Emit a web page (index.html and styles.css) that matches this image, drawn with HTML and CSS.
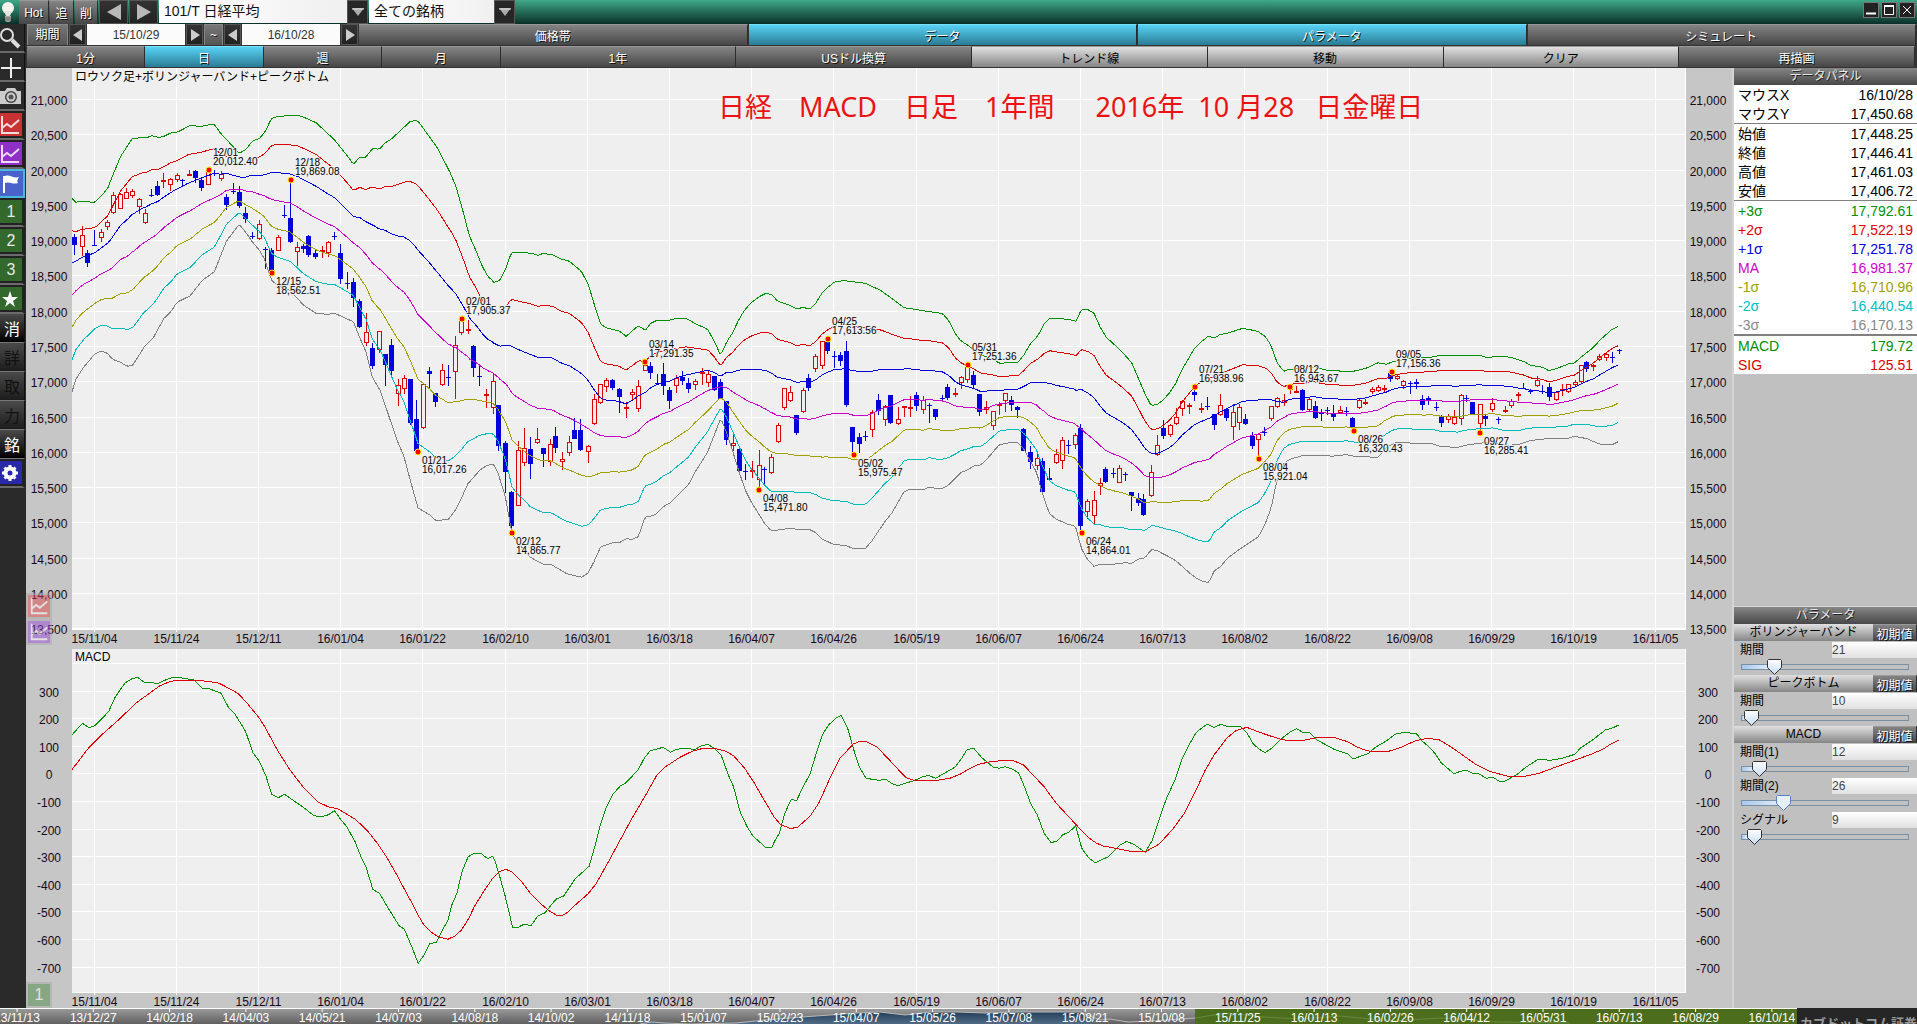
FILE: index.html
```html
<!DOCTYPE html>
<html lang="ja">
<head>
  <meta charset="UTF-8" />
  <meta name="viewport" content="width=device-width, initial-scale=1.0"/>
  <title>101/T 日経平均</title>
  <link rel="stylesheet" href="styles.css">
</head>
<body>
  <header class="titlebar">
    <span class="bulb">
      <svg width="18" height="24" viewBox="0 0 18 24"><circle cx="8" cy="8" r="6" fill="#f4f4ee"/><path d="M4 11h8l-2 5H6z" fill="#e4e4dc"/><path d="M5 16h6v5l-2 1H7l-2-1z" fill="#aaa"/><path d="M5 18h6M5 20h6" stroke="#666"/></svg>
    </span>
    <button class="btn w-hot">Hot</button>
    <button class="btn w-add">追</button>
    <button class="btn w-del">削</button>
    <button class="btn dark w-nav" aria-label="前の銘柄"><svg width="16" height="16" viewBox="0 0 16 16"><path d="M15 0v16L1 8z" fill="#b8b8b8"/></svg></button>
    <button class="btn dark w-nav" aria-label="次の銘柄"><svg width="16" height="16" viewBox="0 0 16 16"><path d="M1 0v16l14-8z" fill="#b8b8b8"/></svg></button>
    <div class="combo combo-name">
      <select aria-label="銘柄"><option>101/T 日経平均</option></select>
      <span class="combo-arrow"><svg width="12" height="8" viewBox="0 0 12 8"><path d="M0 0h12L6 8z" fill="#aaa"/><path d="M0 1h12" stroke="#ddd"/></svg></span>
    </div>
    <div class="combo combo-group">
      <select aria-label="グループ"><option>全ての銘柄</option></select>
      <span class="combo-arrow"><svg width="12" height="8" viewBox="0 0 12 8"><path d="M0 0h12L6 8z" fill="#aaa"/><path d="M0 1h12" stroke="#ddd"/></svg></span>
    </div>
    <div class="window-btns">
      <button aria-label="最小化"><svg width="14" height="14" viewBox="0 0 14 14"><path d="M2 10.5h10" stroke="#fff" stroke-width="2"/></svg></button>
      <button aria-label="最大化"><svg width="14" height="14" viewBox="0 0 14 14"><path d="M2.5 3v8.500h9V3z" fill="none" stroke="#fff"/><path d="M2 3h10" stroke="#fff" stroke-width="2"/></svg></button>
      <button aria-label="閉じる"><svg width="14" height="14" viewBox="0 0 14 14"><path d="M3 3l8 8M11 3l-8 8" stroke="#fff"/></svg></button>
    </div>
  </header>

  <div class="middle">
    <nav class="tools">
      <button aria-label="検索"><svg viewBox="0 0 24 26"><circle cx="7" cy="10" r="6" fill="none" stroke="#ddd" stroke-width="2"/><path d="M12 15l7 7" stroke="#ddd" stroke-width="4"/></svg></button>
      <button aria-label="追加"><svg viewBox="0 0 24 26"><path d="M11 4v20M1 14h20" stroke="#eee" stroke-width="2"/></svg></button>
      <button aria-label="撮影"><svg viewBox="0 0 24 26"><path d="M0 8h5l2-3h8l2 3h4v13H0z" fill="#ccc"/><circle cx="11" cy="14" r="6" fill="#444"/><circle cx="11" cy="14" r="4.500" fill="#ccc"/><circle cx="11" cy="14" r="2.500" fill="#555"/></svg></button>
      <button class="red" aria-label="チャート1"><svg viewBox="0 0 24 26"><path d="M3 4v17h17" fill="none" stroke="#f0dede" stroke-width="2"/><path d="M3 16l5-4 4 3 8-7" fill="none" stroke="#f0dede" stroke-width="2"/></svg></button>
      <button class="purple" aria-label="チャート2"><svg viewBox="0 0 24 26"><path d="M3 4v17h17" fill="none" stroke="#eadcf4" stroke-width="2"/><path d="M3 16l5-4 4 3 8-7" fill="none" stroke="#eadcf4" stroke-width="2"/></svg></button>
      <button class="flag" aria-label="フラグ"><svg viewBox="0 0 24 26"><path d="M4 5v17" stroke="#fff" stroke-width="2"/><path d="M5 5c5-2 8 3 14 1-2 3-2 4-1 6-6 2-8-2-13 0z" fill="#fff"/></svg></button>
      <button class="green">1</button>
      <button class="green">2</button>
      <button class="green">3</button>
      <button class="green" aria-label="お気に入り"><svg viewBox="0 0 24 26"><path d="M11 5l2 6h6l-5 4 2 6-5-4-5 4 2-6-5-4h6z" fill="#fff"/></svg></button>
      <button class="kanji">消</button>
      <button class="kanji off">詳</button>
      <button class="kanji off">取</button>
      <button class="kanji off">力</button>
      <button class="kanji">銘</button>
      <button class="gear" aria-label="設定"><svg viewBox="0 0 24 26"><circle cx="11" cy="13" r="4.500" fill="none" stroke="#fff" stroke-width="4"/><path d="M11 5v3M11 18v3M3 13h3M16 13h3M5.500 7.500l2 2M14.500 16.500l2 2M16.500 7.500l-2 2M5.500 18.500l2-2" stroke="#fff" stroke-width="3"/></svg></button>
    </nav>

    <main class="content">
      <div class="bar">
        <label class="period-label" for="dateFrom">期間</label>
        <button class="btn dark step" aria-label="開始日を戻す"><svg width="10" height="12" viewBox="0 0 10 12"><path d="M9 0v12L0 6z" fill="#ccc"/></svg></button>
        <input class="date" id="dateFrom" value="15/10/29">
        <button class="btn dark step" aria-label="開始日を進める"><svg width="10" height="12" viewBox="0 0 10 12"><path d="M1 0v12l9-6z" fill="#ccc"/></svg></button>
        <label class="tilde" for="dateTo">~</label>
        <button class="btn dark step" aria-label="終了日を戻す"><svg width="10" height="12" viewBox="0 0 10 12"><path d="M9 0v12L0 6z" fill="#ccc"/></svg></button>
        <input class="date" id="dateTo" value="16/10/28">
        <button class="btn dark step" aria-label="終了日を進める"><svg width="10" height="12" viewBox="0 0 10 12"><path d="M1 0v12l9-6z" fill="#ccc"/></svg></button>
        <button class="btn tab">価格帯</button>
        <button class="btn tab on">データ</button>
        <button class="btn tab on">パラメータ</button>
        <button class="btn tab">シミュレート</button>
      </div>
      <div class="bar tabs">
        <button class="btn tab">1分</button>
        <button class="btn tab on">日</button>
        <button class="btn tab">週</button>
        <button class="btn tab">月</button>
        <button class="btn tab wide">1年</button>
        <button class="btn tab wide">USドル換算</button>
        <button class="btn tab wide light">トレンド線</button>
        <button class="btn tab wide light">移動</button>
        <button class="btn tab wide light">クリア</button>
        <button class="btn tab wide">再描画</button>
      </div>

      <div class="work">
        <div class="charts">
          <section class="chart price-chart">
            <svg id="priceChart"></svg>
            <p class="chart-title">ロウソク足+ボリンジャーバンド+ピークボトム</p>
            <h1 class="caption">日経　MACD　日足　1年間　  2016年  10 月28   日金曜日</h1>
            <div class="ghosts">
              <span class="ghost red"><svg viewBox="0 0 24 26"><path d="M4 4v17h17M4 16l5-4 4 3 8-7" fill="none" stroke="#fff" stroke-width="2"/></svg></span>
              <span class="ghost purple"><svg viewBox="0 0 24 26"><path d="M4 4v17h17M4 16l5-4 4 3 8-7" fill="none" stroke="#fff" stroke-width="2"/></svg></span>
            </div>
          </section>
          <section class="chart macd-chart">
            <svg id="macdChart"></svg>
            <p class="chart-title">MACD</p>
            <div class="ghosts">
              <span class="ghost green">1</span>
            </div>
          </section>
        </div>

        <aside class="side">
          <h2 class="side-head">データパネル</h2>
          <table class="data">
            <tbody>
              <tr><th>マウスX</th><td>16/10/28</td></tr>
              <tr><th>マウスY</th><td>17,450.68</td></tr>
            </tbody>
            <tbody>
              <tr><th>始値</th><td>17,448.25</td></tr>
              <tr><th>終値</th><td>17,446.41</td></tr>
              <tr><th>高値</th><td>17,461.03</td></tr>
              <tr><th>安値</th><td>17,406.72</td></tr>
            </tbody>
            <tbody>
              <tr class="c-green"><th>+3σ</th><td>17,792.61</td></tr>
              <tr class="c-red"><th>+2σ</th><td>17,522.19</td></tr>
              <tr class="c-blue"><th>+1σ</th><td>17,251.78</td></tr>
              <tr class="c-magenta"><th>MA</th><td>16,981.37</td></tr>
              <tr class="c-olive"><th>-1σ</th><td>16,710.96</td></tr>
              <tr class="c-cyan"><th>-2σ</th><td>16,440.54</td></tr>
              <tr class="c-gray"><th>-3σ</th><td>16,170.13</td></tr>
            </tbody>
            <tbody>
              <tr class="c-green"><th>MACD</th><td>179.72</td></tr>
              <tr class="c-red"><th>SIG</th><td>125.51</td></tr>
            </tbody>
          </table>

          <div class="params">
            <h2 class="side-head">パラメータ</h2>
            <div class="group-head"><h3>ボリンジャーバンド</h3><button class="btn">初期値</button></div>
            <div class="param">
              <label for="bbVal">期間</label><input id="bbVal" value="21">
              <input type="range" aria-label="ボリンジャーバンド 期間" min="8" max="85" value="21">
            </div>
            <div class="group-head"><h3>ピークボトム</h3><button class="btn">初期値</button></div>
            <div class="param">
              <label for="pbVal">期間</label><input id="pbVal" value="10">
              <input type="range" aria-label="ピークボトム 期間" min="9" max="92" value="10">
            </div>
            <div class="group-head"><h3>MACD</h3><button class="btn">初期値</button></div>
            <div class="param">
              <label for="m1Val">期間(1)</label><input id="m1Val" value="12">
              <input type="range" aria-label="MACD 期間(1)" min="6" max="100" value="12">
            </div>
            <div class="param">
              <label for="m2Val">期間(2)</label><input id="m2Val" value="26">
              <input type="range" class="active" aria-label="MACD 期間(2)" min="6" max="94" value="26">
            </div>
            <div class="param">
              <label for="sgVal">シグナル</label><input id="sgVal" value="9">
              <input type="range" aria-label="シグナル" min="6" max="103" value="9">
            </div>
          </div>
        </aside>
      </div>
    </main>
  </div>

  <footer class="timeline">
    <svg id="timeline"></svg>
    <div class="brand">カブドットコム証券</div>
  </footer>

  <script src="script.js"></script>
</body>
</html>
```

FILE: styles.css
```css
* {
  box-sizing: border-box;
}

body {
  margin: 0;
  height: 100vh;
  display: flex;
  flex-direction: column;
  overflow: hidden;
  background: #2a2a2a;
  font-family: "Liberation Sans", "Noto Sans CJK JP", sans-serif;
  font-size: 12px;
  color: #000;
}

button, input, select {
  font-family: inherit;
  font-size: 12px;
  margin: 0;
  padding: 0;
  border: none;
  border-radius: 0;
}

h1, h2, h3, p {
  margin: 0;
  font-weight: normal;
}

/* title bar */
.titlebar {
  height: 24px;
  flex: none;
  display: flex;
  gap: 1px;
  background: linear-gradient(#3fa888, #0a2f28);
}

.bulb {
  width: 18px;
}

.btn {
  display: flex;
  align-items: center;
  justify-content: center;
  background: linear-gradient(#848484, #464646);
  border-top: 1px solid #999;
  border-right: 1px solid #2c2c2c;
  color: #fff;
  text-shadow: 1px 1px 0 #111;
  white-space: nowrap;
}

.btn.dark {
  background: linear-gradient(#333, #222);
  border: 1px solid #555;
}

.w-hot { width: 30px; }
.w-add { width: 24px; }
.w-del { width: 23px; }
.w-nav { width: 29px; }
.combo-name { width: 209px; }
.combo-group { width: 146px; }

.combo {
  position: relative;
  display: flex;
}

.combo select {
  appearance: none;
  width: 100%;
  height: 23px;
  padding: 0 24px 2px 5px;
  font-size: 14px;
  background: linear-gradient(90deg, #fff, #eee);
  color: #111;
}

.combo-arrow {
  position: absolute;
  right: 0;
  top: 0;
  width: 21px;
  height: 24px;
  display: flex;
  align-items: center;
  justify-content: center;
  background: #262626;
  border: 1px solid #555;
  pointer-events: none;
}

.window-btns {
  margin: 2px 2px 0 auto;
  display: flex;
  gap: 2px;
}

.window-btns button {
  width: 16px;
  height: 16px;
  background: #222;
  border: 1px solid #777;
  display: flex;
}

.middle {
  flex: 1;
  min-height: 0;
  display: flex;
}

/* left tools */
.tools {
  width: 26px;
  flex: none;
  background: #2a2a2a;
}

.tools button {
  display: flex;
  align-items: center;
  justify-content: center;
  width: 25px;
  height: 29px;
  background: #2a2a2a;
  border-bottom: 2px solid #6a6a6a;
  border-right: 1px solid #111;
  color: #fff;
  overflow: hidden;
}

.tools button svg {
  width: 24px;
  height: 26px;
  flex: none;
}

.tools button.red,
.tools button.purple,
.tools button.green,
.tools button.gear {
  border-right: 3px solid #222;
  box-shadow: inset 0 2px 0 #222, inset 0 -2px 0 #222;
}

.tools .red { background: #c83232; }
.tools .purple { background: #9030c8; }
.tools .green { background: #33692c; font-size: 16px; color: #e8e8e8; }
.tools .gear { background: #2828a8; }

.tools .flag {
  background: #4a62cc;
  border: 2px solid #48b8dc;
  border-left: none;
}

.tools .kanji {
  background: linear-gradient(#4a4a4a, #000);
  font-size: 16px;
  border-bottom: 1px solid #777;
}

.tools .kanji.off {
  background: linear-gradient(#4a4a4a, #1c1c1c);
  color: #111;
}

.content {
  flex: 1;
  min-width: 0;
  display: flex;
  flex-direction: column;
}

/* period and tab rows */
.bar {
  height: 22px;
  flex: none;
  display: flex;
  gap: 1px;
  padding: 0 1px 1px 1px;
  background: #333;
}

.bar.tabs {
  gap: 0;
  padding-right: 2px;
}

.period-label,
.tilde {
  width: 41px;
  flex: none;
  line-height: 20px;
  text-align: center;
  color: #fff;
  background: linear-gradient(#777, #555);
  border: 1px solid #888;
  border-bottom: none;
  text-shadow: 1px 1px 0 #111;
}

.tilde {
  width: 19px;
}

.step {
  width: 17px;
  flex: none;
}

.date {
  width: 98px;
  flex: none;
  text-align: center;
  background: #fbfbfb;
  color: #333;
}

.tab {
  flex: 1;
  min-width: 0;
}

.tab.wide {
  flex: 2;
}

.tab.on {
  background: linear-gradient(#58d2f6, #2a7c94);
  border-top-color: #7ae0fa;
}

.tab.light {
  background: linear-gradient(#e0e0e0, #858585);
  color: #000;
  text-shadow: none;
}

.work {
  flex: 1;
  min-height: 0;
  display: flex;
}

/* charts */
.charts {
  flex: 1;
  min-width: 0;
  display: flex;
  flex-direction: column;
  background: #c6c6c6;
  border-right: 2px solid #d4d4d4;
}

.chart {
  position: relative;
  min-height: 0;
}

.price-chart {
  flex: 580;
}

.macd-chart {
  flex: 360;
}

.chart > svg {
  display: block;
  position: absolute;
  width: 100%;
  height: 100%;
  overflow: visible;
}

.chart-title {
  position: absolute;
  top: 0;
  left: 49px;
  line-height: 18px;
  white-space: nowrap;
}

.caption {
  position: absolute;
  top: 19px;
  left: 0;
  width: 100%;
  padding-left: 692px;
  font-family: "Noto Sans", "Noto Sans CJK JP", sans-serif;
  font-size: 27px;
  line-height: 40px;
  white-space: pre;
  color: #ea1212;
}

.ghosts {
  position: absolute;
  left: 0;
  bottom: 0;
  display: flex;
  flex-direction: column;
  opacity: 0.5;
}

.ghost {
  width: 26px;
  height: 26px;
  border: 2px solid #aaa;
  display: flex;
  align-items: center;
  justify-content: center;
  font-size: 16px;
  color: #fff;
}

.ghost.red { background: #e04848; }
.ghost.purple { background: #9a4ad8; }
.ghost.green { background: #4a8a44; }

.price-chart .ghosts {
  bottom: 3px;
}

.grid { stroke: #fff; }
.plot { fill: #efefef; }
.axis { font-size: 12px; text-anchor: middle; fill: #180818; }
.line { fill: none; stroke-width: 1; }
.up { fill: #efefef; stroke: #dd0000; }
.up-wick { stroke: #dd0000; }
.down { fill: #0000dd; }
.down-wick { stroke: #0000dd; }
.peak { fill: #ff0000; stroke: #ffee00; stroke-width: 1; }

.peak-text {
  font-size: 10px;
  fill: #000;
  stroke: #efefef;
  stroke-width: 2;
  paint-order: stroke;
}

/* right panel */
.side {
  width: 183px;
  flex: none;
  background: #c0c0c0;
  overflow: hidden;
}

.side-head {
  height: 17px;
  line-height: 16px;
  font-size: 12px;
  text-align: center;
  color: #e8e8e8;
  background: linear-gradient(#868686, #484848);
  text-shadow: 1px 1px 0 #222;
}

.data {
  width: 100%;
  border-collapse: separate;
  border-spacing: 0;
  background: #fff;
  font-size: 14px;
}

.data th,
.data td {
  height: 19px;
  line-height: 18px;
  padding: 1px 4px 0;
  font-weight: normal;
  text-align: left;
}

.data td {
  text-align: right;
}

.data tbody + tbody tr:first-child > * {
  height: 20px;
  border-top: 1px solid #808080;
}

.data tbody:last-child tr:first-child > * {
  height: 21px;
  border-top-width: 2px;
}

.c-green { color: #009000; }
.c-red { color: #e00000; }
.c-blue { color: #0000e0; }
.c-magenta { color: #d000d0; }
.c-olive { color: #a0a000; }
.c-cyan { color: #00c0c0; }
.c-gray { color: #888; }

.params {
  margin-top: 232px;
  border-top: 1px solid #d8d8d8;
}

.group-head {
  height: 17px;
  display: flex;
  background: linear-gradient(#e0e0e0, #868686);
}

.group-head h3 {
  flex: 1;
  font-size: 12px;
  line-height: 17px;
  text-align: center;
}

.group-head .btn {
  width: 44px;
}

.param {
  display: grid;
  grid-template-columns: 98px 1fr;
  grid-template-rows: 17px 17px;
}

.param label {
  padding-left: 6px;
  line-height: 18px;
}

.param input:not([type=range]) {
  min-width: 0;
  height: 16px;
  margin-top: 1px;
  background: linear-gradient(#fff, #e0e0e0);
  color: #444;
}

.param input[type=range] {
  grid-column: 1 / 3;
  appearance: none;
  margin: 0 8px 0 7px;
  height: 17px;
  background: none;
}

.param input[type=range]::-webkit-slider-runnable-track {
  height: 6px;
  border: 1px solid #7890a4;
  background: linear-gradient(90deg, #a8c8ee, #e0ecf8) 0 0 / var(--fill) 100% no-repeat;
}

.param input[type=range]::-webkit-slider-thumb {
  appearance: none;
  width: 15px;
  height: 16px;
  margin-top: -6px;
  background: url("data:image/svg+xml,%3Csvg xmlns='http://www.w3.org/2000/svg' width='15' height='16'%3E%3ClinearGradient id='g' x2='0' y2='1'%3E%3Cstop stop-color='%23fff'/%3E%3Cstop offset='1' stop-color='%23c4dcf0'/%3E%3C/linearGradient%3E%3Cpath d='M1.500 .5h12l1 1v7l-7 7-7-7v-7z' fill='url(%23g)' stroke='%23333'/%3E%3C/svg%3E");
}

.param input.active::-webkit-slider-thumb {
  background: url("data:image/svg+xml,%3Csvg xmlns='http://www.w3.org/2000/svg' width='15' height='16'%3E%3Cpath d='M1.500 .5h12l1 1v7l-7 7-7-7v-7z' fill='%23e4effa' stroke='%235a80c8'/%3E%3C/svg%3E");
}

/* bottom timeline */
.timeline {
  height: 16px;
  flex: none;
  display: flex;
  overflow: hidden;
}

.timeline svg {
  flex: 1;
  min-width: 0;
  height: 16px;
  border-top: 1px solid #fff;
}

.tl-text {
  font-size: 12px;
  text-anchor: middle;
  fill: #fff;
}

.brand {
  width: 120px;
  flex: none;
  height: 16px;
  padding: 7px 0 0 3px;
  font-size: 13px;
  font-weight: bold;
  line-height: 18px;
  color: #999;
  background: #262626;
  white-space: nowrap;
}
```

FILE: script.js
```js
// Each block holds an origin, the units per pixel (x, y) and its rows
const candles = [
  { x: 70, y: 90, kx: 3, ky: 3, rows: `
b 13 433 441 464 494|r 36 408 436 470 498|b 52 479 489 518 530|b 72 420 465 467 467|r 92 417 427 445 456
r 110 389 397 412 419|r 129 307 316 368 372|r 149 308 311 356 356|r 167 295 307 326 326|r 186 297 304 318 324
r 206 323 328 350 372|r 225 358 370 399 402|b 243 297 315 317 321|b 262 273 288 314 318|r 280 248 270 273 293
r 300 264 268 284 303|r 320 248 256 270 276|b 337 267 270 273 290|r 358 240 252 255 258|b 376 239 243 264 278
b 394 263 270 294 303|r 414 240 240 284 286|b 433 239 248 250 258|r 452 244 251 266 272|b 469 312 321 345 359
b 490 279 303 305 313|b 508 287 306 348 354|b 526 350 369 387 399|b 546 427 438 440 448|r 567 390 403 448 450
b 584 472 478 480 538|b 603 475 480 543 548|r 624 436 442 482 482|b 641 345 376 378 384|b 660 270 384 456 460
r 680 457 470 486 528|b 698 462 468 476 490|b 715 434 438 494 501|b 736 479 489 501 508|r 755 468 479 487 503
r 774 452 457 488 500|b 793 427 438 441 449|b 811 461 489 567 583|b 831 545 580 582 597|b 850 564 576 624 652
b 868 628 633 711 714|r 888 669 727 758 768` },
  { x: 340, y: 250, kx: 3, ky: 3, rows: `
b 97 279 294 347 357|r 117 244 244 301 309|b 134 312 312 345 408|b 154 266 285 362 385|r 173 387 406 433 467
r 192 376 385 416 433|b 211 387 387 518 524|b 229 450 507 602 606|r 249 402 403 535 537|b 268 350 363 371 413
b 286 428 429 456 471|r 306 343 361 406 408|b 325 345 382 385 408|r 345 258 286 365 447|r 363 210 213 248 255
r 383 210 238 244 252|b 400 284 288 353 381|b 418 347 379 382 408|r 438 417 433 439 474|r 458 371 394 475 492
b 475 465 465 587 602|b 496 572 579 665 728|b 514 722 726 827 840|r 534 572 601 767 768|r 553 535 595 640 647
b 571 561 598 641 687|r 590 534 566 578 582|b 609 594 594 611 651|r 629 567 583 637 647|b 646 531 559 594 608
r 667 607 626 637 659|r 686 558 577 610 617|b 703 504 540 566 566|b 721 507 540 599 602|r 743 585 589 605 638
r 762 433 448 523 524|r 780 403 403 460 461|r 799 385 391 412 426|b 817 387 391 413 420|b 838 414 417 440 489
r 857 455 472 475 504|r 876 417 427 436 454|r 894 390 409 478 487|r 915 342 345 364 364|b 931 336 348 369 387
b 952 373 400 402 405|b 970 339 372 408 435|b 988 411 420 453 476|r 1008 376 384 409 429|b 1027 362 381 392 405
b 1045 384 399 416 429|r 1066 387 394 406 419|r 1085 355 366 369 404|r 1104 364 373 400 412|b 1121 377 379 419 422
b 1141 388 396 446 447|b 1159 453 454 569 585|r 1179 555 580 588 602` },
  { x: 720, y: 290, kx: 3, ky: 3, rows: `
b 58 471 478 542 552|b 76 521 543 546 570|r 95 513 541 544 564|r 117 480 525 571 598|b 133 530 537 539 588
r 152 491 502 548 552|r 173 400 406 457 458|r 191 294 295 355 360|r 210 288 307 334 336|b 228 375 376 429 434
r 248 294 301 365 369|b 265 252 264 294 303|r 286 192 199 236 245|r 306 153 154 229 237|b 322 150 157 183 192
b 343 183 198 201 234|b 361 185 195 213 228|b 379 153 183 345 351|b 397 411 412 456 492|b 418 430 442 462 489
b 436 422 437 440 453|r 456 361 367 421 441|b 475 312 330 362 375|r 494 345 349 391 408|b 511 315 315 398 402
r 534 352 388 403 404|r 552 348 349 355 381|r 571 318 352 358 381|b 589 306 315 348 362|r 609 319 331 361 372
b 627 339 345 347 399|b 646 357 358 381 390|b 665 315 324 326 333|b 682 282 291 324 330|r 705 294 309 314 321
r 722 258 262 280 297|r 741 223 228 269 279|b 760 243 255 285 297|b 778 312 313 366 378|r 799 334 352 361 372
r 819 363 364 409 420|r 836 336 342 348 375|r 856 309 310 334 367|b 874 318 330 345 363|b 892 348 351 359 384
b 910 414 417 482 483|b 931 468 486 516 537|r 950 486 505 529 540|b 967 504 513 606 616|b 988 534 565 570 573
r 1008 477 493 520 521|r 1026 442 451 514 537|b 1045 451 466 469 491|r 1065 429 436 466 477|b 1081 402 415 708 720
r 1102 627 634 667 687|r 1122 603 631 679 702|r 1140 564 580 589 615|b 1156 531 537 575 580|b 1178 534 549 551 564
r 1197 525 535 580 580|b 1216 547 553 555 573|b 1234 606 606 618 663` },
  { x: 1100, y: 320, kx: 2.904, ky: 3, rows: `
b 109 518 534 549 558|b 126 522 537 585 588|r 148 434 457 529 530|r 165 345 376 406 408|b 182 300 324 348 356
r 203 312 316 346 350|r 220 264 292 313 315|r 239 240 244 268 288|r 258 250 254 260 282|b 274 210 216 224 243
r 294 249 265 268 279|b 312 230 258 262 270|b 330 282 282 315 330|r 348 222 256 286 287|b 367 265 267 294 303
r 386 252 277 321 360|r 404 252 261 310 330|b 422 282 297 312 315|b 440 336 348 378 387|r 459 342 343 361 407
b 477 321 336 339 348|r 496 258 259 298 302|r 514 231 235 262 263|r 533 223 240 249 258|r 551 204 205 211 223
r 569 198 213 216 218|b 588 207 210 270 273|r 607 232 238 271 273|b 623 243 258 294 297|b 642 267 279 281 303
b 660 262 270 272 284|b 678 255 279 291 303|r 698 257 271 280 281|b 715 262 273 276 288|b 733 291 294 321 327
r 753 234 241 264 266|r 771 237 245 250 256|r 789 202 208 217 222|r 808 194 202 212 217|r 826 195 203 206 216
b 843 150 160 177 186|r 862 162 169 178 180|r 881 180 184 199 206|b 899 183 189 192 222|b 918 178 187 193 207
b 936 226 237 255 270|b 953 228 235 241 256|b 975 247 261 265 272|b 991 285 288 309 321|r 1010 282 287 301 308
r 1028 270 291 313 314|r 1047 222 226 298 315|b 1064 226 234 237 246|b 1081 246 246 282 286|r 1103 253 253 313 345
b 1119 286 289 297 318|r 1138 234 250 269 275|b 1157 290 297 299 312|r 1175 258 271 277 280|r 1194 238 242 258 263
r 1213 216 223 229 243|b 1229 189 205 208 208|b 1250 207 213 215 222|r 1269 168 181 199 200|b 1284 195 213 216 222
b 1303 189 201 231 243|r 1324 213 217 239 243|r 1341 192 207 211 228|r 1358 192 193 215 219|r 1379 180 187 196 201
r 1397 135 136 187 188|b 1412 123 126 146 156|r 1433 131 136 139 153|r 1450 102 109 121 123|r 1469 99 103 115 122
b 1487 96 112 114 128|b 1506 87 91 93 102` }
];

// +3σ
const upper = [
  { x: 70, y: 90, kx: 3, ky: 3, pts: '8 328 18 337 30 334 75 337 92 320 113 295 132 247 152 199 186 147 209 143 230 143 246 137 263 142 280 140 303 128 320 127 337 119 358 107 394 109 432 102 452 130 508 190 528 178 548 153 568 146 586 124 604 86 622 79 684 76 700 81 738 98 794 150 834 200 850 223 869 202 887 202 908 175 928 178 946 158 964 147 1020 95 1042 91 1062 118 1101 172 1140 247 1158 290 1178 360 1198 437' },
  { x: 340, y: 250, kx: 3, ky: 3, pts: '408 2 425 45 442 77 462 97 478 92 496 60 514 8 571 9 594 16 610 10 641 15 661 27 687 33 724 64 745 104 764 167 782 223 800 234 838 243 858 259 895 227 916 241 932 220 950 211 990 210 1008 206 1040 206 1070 223 1102 237 1121 270 1142 316' },
  { x: 720, y: 290, kx: 3, ky: 3, pts: '20 156 38 128 56 90 74 60 93 39 118 20 138 10 156 14 172 33 212 47 232 58 248 51 268 58 286 42 304 12 320 -5 343 -24 372 -28 436 -20 480 0 515 25 552 53 572 56 668 71 687 93 705 130 722 152 744 166 780 193 818 208 840 220 895 216 912 194 932 160 952 140 972 103 990 84 1044 88 1068 94 1084 59 1104 59 1122 70' },
  { x: 1100, y: 320, kx: 2.904, ky: 3, pts: '0 20 18 52 55 86 92 128 130 220 148 256 166 254 183 240 201 220 220 190 240 145 257 116 275 84 298 62 314 49 332 54 350 43 370 40 414 25 440 30 460 35 480 50 496 75 514 127 533 154 550 148 590 146 620 141 660 151 680 150 700 154 735 154 772 145 808 128 830 133 848 126 900 115 960 112 990 106 1108 107 1120 112 1175 109 1200 114 1232 125 1250 136 1285 142 1303 152 1325 146 1360 132 1378 129 1396 112 1432 83 1452 60 1488 27 1506 19' }
];

// -3σ
const lower = [
  { x: 0, y: 240, kx: 3, ky: 3, pts: '217 452 228 417 250 383 285 341 302 334 320 338 338 358 360 366 382 379 398 376 432 322 460 293 492 235 513 215 530 188 548 178 570 168 606 122 643 95' },
  { x: 70, y: 90, kx: 3, ky: 3, pts: '470 452 508 403 528 428 548 457 568 480 584 508 604 570 622 586 660 601 700 645 738 670 772 673 794 670 850 695' },
  { x: 340, y: 250, kx: 3, ky: 3, pts: '60 265 78 305 97 382 120 420 154 520 173 575 192 620 212 695 234 774 270 795 286 811 324 809 345 782 363 748 383 702 420 660 440 647 460 642 475 672 496 740 516 852 534 878 571 922 610 943 631 942 680 971 725 982 745 968 762 935 782 890 818 878 838 878 860 866 876 868 895 860 915 801 932 799 950 791 970 770 990 759 1045 705 1066 665 1102 608 1121 560 1142 505' },
  { x: 720, y: 290, kx: 3, ky: 3, pts: '20 428 40 490 58 548 76 600 93 635 112 665 135 702 154 723 210 715 230 718 268 718 286 727 306 747 340 763 380 767 400 776 436 776 456 752 494 696 516 668 552 605 570 598 610 600 628 590 644 595 668 595 687 584 722 548 740 541 764 526 782 525 800 508 838 464 870 458 894 459 912 478 932 515 950 548 967 610 988 670 1008 687 1044 703 1066 708 1084 775 1102 808 1122 829' },
  { x: 1100, y: 320, kx: 2.904, ky: 3, pts: '0 733 37 733 72 728 92 730 110 718 130 714 150 688 166 692 203 712 220 722 258 757 276 772 298 784 316 788 332 752 350 740 370 715 405 688 440 664 460 650 478 615 496 568 514 480 533 432 550 418 588 407 680 408 716 404 740 409 808 412 826 388 845 374 862 367 900 369 940 371 965 371 990 380 1040 382 1064 375 1100 370 1140 366 1175 376 1215 374 1250 362 1285 357 1360 355 1378 349 1414 356 1450 372 1488 374 1506 364' }
];

const macd = [
  { x: 60, y: 650, kx: 1.96, ky: 3, pts: '24 254 44 220 57 233 68 227 86 200 96 182 108 142 120 115 128 98 140 87 152 82 165 97 192 100 205 91 218 84 230 82 262 90 279 115 292 116 316 130 330 172 342 190 364 245 378 308 390 333 403 375 415 433 428 443 440 433 478 473 495 494 503 499 516 499 526 494 538 482 550 508 562 530 578 574 590 620 600 652 613 718 627 731 638 761 665 828 675 838 690 892 702 940 712 918 725 881 738 877 750 838 760 812 768 765 778 730 788 665 800 620 812 610 825 610 838 626 848 618 853 635 862 680 872 735 887 832 898 832 910 822 923 827 937 797 950 789 972 748 987 738 1010 686 1037 649 1050 580 1060 520 1070 475 1084 432 1098 408 1108 400 1133 360 1145 325 1157 302 1182 292 1197 307 1207 299 1220 295 1245 298 1258 287 1269 283 1282 294 1296 316 1310 375 1320 410 1333 485 1346 528 1358 558 1383 592 1395 592 1402 570 1410 550 1420 492 1433 449 1444 451 1456 412 1470 372 1482 312 1494 255 1506 226 1520 205 1531 196' },
  { x: 840, y: 690, kx: 1.96, ky: 3, pts: '4 80 15 115 26 175 37 228 51 265 76 271 90 268 103 282 113 287 125 281 145 272 162 260 174 256 187 265 225 232 238 206 249 179 262 175 278 203 300 231 312 235 323 230 336 236 350 248 362 292 374 342 387 375 400 430 414 458 425 453 437 434 449 426 462 408 474 475 487 503 500 518 526 500 549 465 562 454 578 465 598 487 612 452 625 390 640 325 658 265 670 208 684 165 698 128 712 110 720 103 733 112 747 103 758 109 785 110 798 130 810 162 822 178 833 188 847 174 862 150 882 126 895 116 907 127 920 128 935 150 970 179 995 192 1006 207 1018 200 1035 191 1050 171 1070 154 1088 133 1105 127 1130 131 1142 155 1152 167 1166 190 1178 218 1204 252 1215 244 1228 241 1240 250 1252 251 1267 265 1280 262 1292 274 1303 274 1328 252 1343 233 1368 208 1392 211 1416 205 1440 193 1452 173 1475 150 1500 120 1514 114 1526 105' }
];

const signal = [
  { x: 60, y: 650, kx: 1.96, ky: 3, pts: '24 358 57 292 85 250 115 209 150 158 195 108 215 95 230 91 265 91 290 94 312 100 340 122 350 132 366 158 390 203 402 232 427 303 450 358 475 408 505 455 525 470 545 477 580 509 604 545 622 580 642 626 662 680 682 738 692 765 702 796 713 824 728 847 742 861 760 868 774 858 787 840 802 803 812 770 830 725 848 685 862 664 874 658 887 667 905 695 922 730 945 765 962 786 974 796 985 796 995 787 1010 765 1035 731 1050 703 1075 635 1098 570 1120 508 1150 430 1170 375 1187 350 1215 322 1240 303 1258 296 1282 295 1305 304 1320 317 1342 355 1362 402 1380 450 1400 502 1412 523 1432 536 1446 531 1470 499 1487 460 1510 382' },
  { x: 840, y: 690, kx: 1.96, ky: 3, pts: '0 205 12 185 26 162 37 155 50 154 72 170 92 202 115 240 130 263 148 273 190 271 215 265 235 253 252 238 272 223 298 214 338 211 360 225 374 248 400 290 424 340 462 403 485 440 502 459 516 468 540 475 570 484 600 484 625 463 652 418 675 370 698 300 715 243 733 195 758 145 775 123 797 112 830 131 860 146 880 152 908 151 935 143 968 142 995 155 1012 170 1030 181 1045 185 1075 184 1100 172 1128 152 1152 145 1175 150 1200 173 1245 222 1275 245 1310 259 1342 259 1370 250 1425 219 1470 194 1495 178 1510 163 1526 151' }
];

// x, y, date, price, 1 = peak / 0 = bottom
const peaks = [
  [209, 170, '12/01', '20,012.40', 1], [291, 180, '12/18', '19,869.08', 1],
  [272, 273, '12/15', '18,562.51', 0], [462, 319, '02/01', '17,905.37', 1],
  [418, 452, '01/21', '16,017.26', 0], [512, 533, '02/12', '14,865.77', 0],
  [645, 362, '03/14', '17,291.35', 1], [759, 490, '04/08', '15,471.80', 0],
  [828, 339, '04/25', '17,613.56', 1], [854, 455, '05/02', '15,975.47', 0],
  [968, 365, '05/31', '17,251.36', 1], [1082, 533, '06/24', '14,864.01', 0],
  [1195, 387, '07/21', '16,938.96', 1], [1259, 459, '08/04', '15,921.04', 0],
  [1290, 387, '08/12', '16,943.67', 1], [1354, 431, '08/26', '16,320.43', 0],
  [1392, 372, '09/05', '17,156.36', 1], [1480, 433, '09/27', '16,285.41', 0]
];

const dates = ['15/11/04', '15/11/24', '15/12/11', '16/01/04', '16/01/22', '16/02/10', '16/03/01', '16/03/18', '16/04/07', '16/04/26', '16/05/19', '16/06/07', '16/06/24', '16/07/13', '16/08/02', '16/08/22', '16/09/08', '16/09/29', '16/10/19', '16/11/05'];
const timelineDates = ['13/11/13', '13/12/27', '14/02/18', '14/04/03', '14/05/21', '14/07/03', '14/08/18', '14/10/02', '14/11/18', '15/01/07', '15/02/23', '15/04/07', '15/05/26', '15/07/08', '15/08/21', '15/10/08', '15/11/25', '16/01/13', '16/02/26', '16/04/12', '16/05/31', '16/07/13', '16/08/29', '16/10/14'];

const LEFT = 26, CHART_W = 1706;
const PLOT_L = 72, PLOT_R = 1685;

function trace(blocks) {
  const out = [];
  blocks.forEach(b => {
    const n = b.pts.split(' ').map(Number);
    for (let i = 0; i < n.length; i += 2) {
      out.push([b.x + n[i] / b.kx, b.y + n[i + 1] / b.ky]);
    }
  });
  return out;
}

function valueAt(points, x) {
  let i = 1;
  while (i < points.length - 1 && points[i][0] < x) i++;
  const [x0, y0] = points[i - 1];
  const [x1, y1] = points[i];
  return y0 + (y1 - y0) * (x - x0) / (x1 - x0);
}

function polyline(points, color, px, py) {
  const s = points.map(p => px(p[0]).toFixed(1) + ',' + py(p[1]).toFixed(1)).join(' ');
  return `<polyline class="line" stroke="${color}" points="${s}"/>`;
}

function scales(svg, top, height) {
  const sx = svg.clientWidth / CHART_W;
  const sy = svg.clientHeight / height;
  return [x => (x - LEFT) * sx, y => (y - top) * sy];
}

function frame(px, py, top, bottom, rows) {
  const l = Math.round(px(PLOT_L)), r = Math.round(px(PLOT_R));
  const t = Math.round(py(top)), b = Math.round(py(bottom));
  let s = `<rect class="plot" x="${l}" y="${t}" width="${r - l}" height="${b - t}"/>`;
  rows.forEach(([y, label]) => {
    const yy = Math.floor(py(y)) + 0.5;
    s += `<path class="grid" d="M${l} ${yy}H${r}"/>`;
    s += `<text class="axis" x="${px(49)}" y="${yy + 5}">${label}</text>`;
    s += `<text class="axis" x="${px(1708)}" y="${yy + 5}">${label}</text>`;
  });
  dates.forEach((d, i) => {
    const x = Math.floor(px(94 + i * 82.2)) + 0.5;
    s += `<path class="grid" d="M${x} ${t}V${b + 2}"/>`;
    s += `<text class="axis" x="${x}" y="${b + 13}">${d}</text>`;
  });
  return s + `<path class="grid" d="M${l} ${b - 0.5}H${r}M${r + 0.5} ${t}V${b}"/>`;
}

function drawPrice() {
  const svg = document.getElementById('priceChart');
  const [px, py] = scales(svg, 68, 580);
  const rows = [];
  for (let i = 0; i <= 15; i++) {
    rows.push([99.5 + i * 35.28, (21000 - i * 500).toLocaleString('en-US')]);
  }
  let s = frame(px, py, 68, 630, rows) + '<g shape-rendering="crispEdges">';

  candles.forEach(b => {
    b.rows.trim().split(/[|\n]/).forEach(row => {
      const [kind, ...n] = row.split(' ');
      const x = Math.round(px(b.x + n[0] / b.kx));
      const [hi, top, bot, lo] = n.slice(1).map(v => Math.round(py(b.y + v / b.ky)));
      const h = Math.max(bot - top, 1);
      if (kind === 'r') {
        s += `<path class="up-wick" d="M${x + 0.5} ${hi}V${top}M${x + 0.5} ${bot}V${lo}"/>`;
        s += `<rect class="up" x="${x - 1.5}" y="${top + 0.5}" width="4" height="${Math.max(h - 1, 1)}"/>`;
      } else {
        s += `<path class="down-wick" d="M${x + 0.5} ${hi}V${lo}"/>`;
        s += `<rect class="down" x="${x - 2}" y="${top}" width="5" height="${h}"/>`;
      }
    });
  });

  // the seven bands are evenly spaced between +3σ and -3σ
  const up = trace(upper), low = trace(lower);
  const colors = ['#009000', '#dd0000', '#0000dd', '#cc00cc', '#a0a000', '#00bbbb', '#808080'];
  colors.forEach((color, k) => {
    const pts = [];
    for (let x = 72; x <= 1619; x += 2) {
      const u = valueAt(up, x), l = valueAt(low, x);
      pts.push([x, u + (l - u) * k / 6]);
    }
    s += polyline(pts, color, px, py);
  });
  s += '</g>';

  peaks.forEach(([x, y, date, price, high]) => {
    const cx = px(x), cy = py(y), ty = high ? cy - 14 : cy + 12;
    s += `<circle class="peak" cx="${cx}" cy="${cy}" r="3"/>`;
    s += `<text class="peak-text" x="${cx + 4}" y="${ty}">${date}</text>`;
    s += `<text class="peak-text" x="${cx + 4}" y="${ty + 9}">${price}</text>`;
  });
  svg.innerHTML = s;
}

function drawMacd() {
  const svg = document.getElementById('macdChart');
  const [px, py] = scales(svg, 648, 360);
  const rows = [];
  for (let i = 0; i <= 11; i++) {
    rows.push([663.5 + i * 27.6, i ? 400 - i * 100 : '']);
  }
  svg.innerHTML = frame(px, py, 649, 993, rows) +
    '<g shape-rendering="crispEdges">' +
    polyline(trace(macd), '#009000', px, py) +
    polyline(trace(signal), '#dd0000', px, py) + '</g>';
}

function drawTimeline() {
  const svg = document.getElementById('timeline');
  const w = svg.clientWidth, k = w / 1797;
  const area = [[640, 15], [652, 13], [664, 14], [690, 15], [736, 14], [765, 11], [802, 8], [830, 6], [857, 4], [880, 3], [905, 6], [930, 3], [957, 3], [985, 4], [1020, 3], [1080, 3], [1090, 7], [1100, 11], [1110, 10], [1128, 13], [1152, 12], [1195, 9]];
  const tail = [[1195, 9], [1214, 6], [1232, 4], [1263, 8], [1300, 10], [1340, 7], [1390, 12], [1440, 9], [1500, 13], [1570, 14]];
  const str = a => a.map(p => p[0] * k + ',' + p[1]).join(' ');
  let s = `<defs><linearGradient id="tg" x2="0" y2="1"><stop stop-color="#999"/><stop offset="1" stop-color="#5c5c5c"/></linearGradient>
    <linearGradient id="ta" x2="0" y2="1"><stop stop-color="#223e58"/><stop offset="1" stop-color="#56708a"/></linearGradient></defs>`;
  s += `<rect width="${w}" height="16" fill="url(#tg)"/>`;
  s += `<polygon points="${str(area.slice(0, 16))} ${1095 * k},16 ${640 * k},16" fill="url(#ta)"/>`;
  s += `<polyline points="${str(area)}" fill="none" stroke="#bbb"/>`;
  s += `<rect x="${1195 * k}" width="${602 * k}" height="16" fill="#4c6e1c"/>`;
  s += `<polyline points="${str(tail)}" fill="none" stroke="#66883c"/>`;
  timelineDates.forEach((d, i) => {
    const x = (17 + i * 76.3) * k;
    s += `<path d="M${x} 0v3" stroke="#fff"/><text class="tl-text" x="${x}" y="13">${d}</text>`;
  });
  svg.innerHTML = s;
}

function draw() {
  drawPrice();
  drawMacd();
  drawTimeline();
}

document.querySelectorAll('input[type=range]').forEach(r => {
  const fill = () => r.style.setProperty('--fill', (r.value - r.min) / (r.max - r.min) * 100 + '%');
  r.addEventListener('input', fill);
  fill();
});

window.addEventListener('resize', draw);
draw();
```
